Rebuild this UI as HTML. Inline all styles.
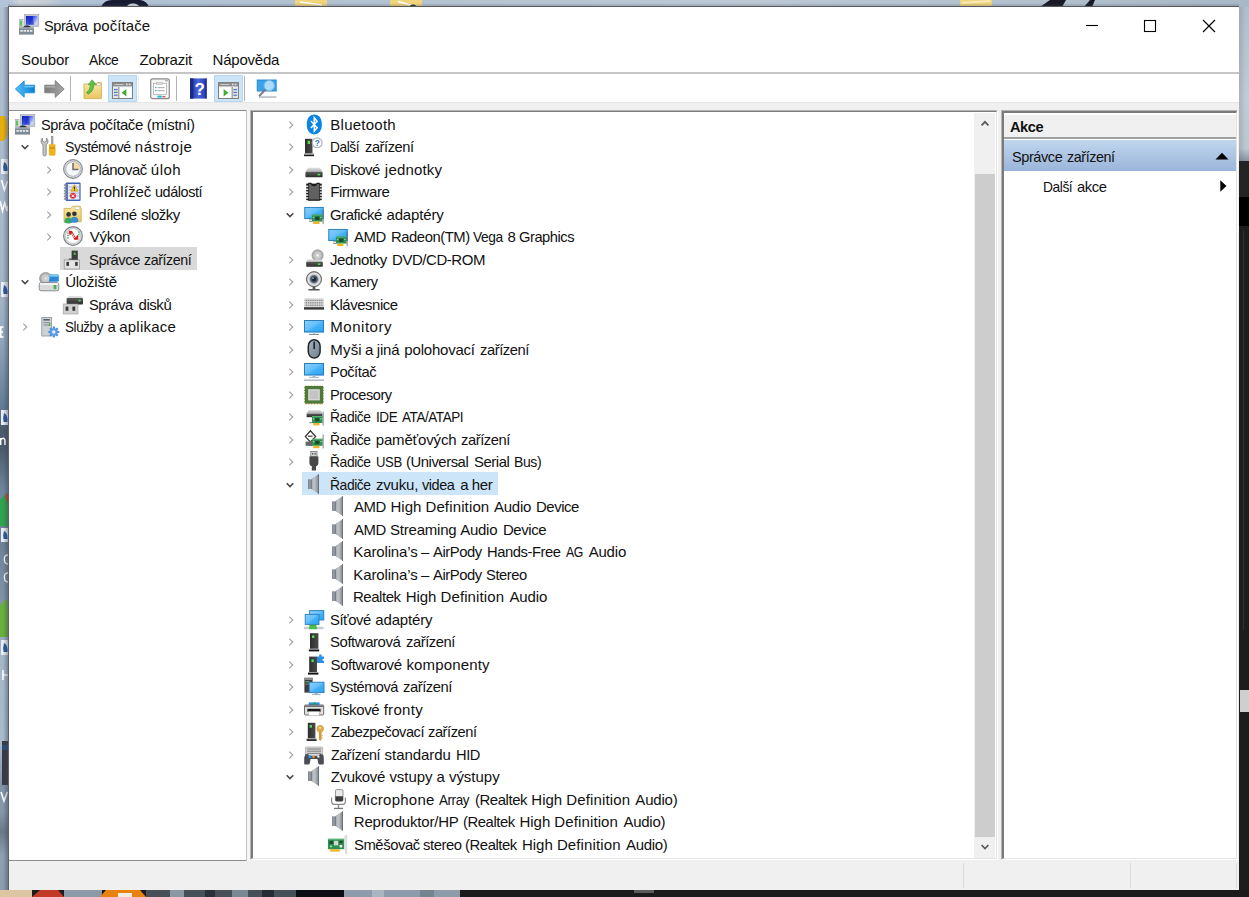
<!DOCTYPE html>
<html><head><meta charset="utf-8"><title>Správa počítače</title>
<style>
html,body{margin:0;padding:0}
body{width:1249px;height:897px;overflow:hidden;position:relative;background:#1c1c1c;font-family:"Liberation Sans",sans-serif;font-size:15px;color:#000}
.ab{position:absolute;display:block}
.tx{position:absolute;white-space:pre;line-height:22.5px;height:22.5px;font-size:15px;color:#111}
#win{position:absolute;left:8px;top:6px;width:1231px;height:884px;background:#fff}
</style></head><body>
<svg class="ab" style="left:0;top:0" width="1249" height="897" viewBox="0 0 1249 897">
<defs>
<linearGradient id="bgTop" x1="0" y1="0" x2="1" y2="0"><stop offset="0" stop-color="#b3c4d7"/><stop offset="0.008" stop-color="#b3c4d7"/><stop offset="0.016" stop-color="#cdd3da"/><stop offset="0.036" stop-color="#c6cdd5"/><stop offset="0.05" stop-color="#b2c3d5"/><stop offset="0.1" stop-color="#b0c2d4"/><stop offset="0.3" stop-color="#b4c3d1"/><stop offset="0.6" stop-color="#bcc9d5"/><stop offset="0.85" stop-color="#b2c0cd"/><stop offset="1" stop-color="#a9b8c6"/></linearGradient>
<linearGradient id="bgLeft" gradientUnits="userSpaceOnUse" x1="0" y1="0" x2="0" y2="897"><stop offset="0.0078" stop-color="#b0c1d3"/><stop offset="0.1561" stop-color="#aabbcf"/><stop offset="0.3344" stop-color="#a2b4c8"/><stop offset="0.3790" stop-color="#90a7bc"/><stop offset="0.4571" stop-color="#5f7a94"/><stop offset="0.4794" stop-color="#4a5a6c"/><stop offset="0.5017" stop-color="#4c5c6e"/><stop offset="0.5463" stop-color="#6f869e"/><stop offset="0.6076" stop-color="#6f8298"/><stop offset="0.6689" stop-color="#7f93a8"/><stop offset="0.7302" stop-color="#a4b7c9"/><stop offset="0.8250" stop-color="#a9bccd"/><stop offset="0.8763" stop-color="#8093a8"/><stop offset="0.9052" stop-color="#8597ab"/><stop offset="0.9275" stop-color="#6b7989"/><stop offset="0.9532" stop-color="#8ea0b4"/><stop offset="0.9922" stop-color="#8a9cb0"/></linearGradient>
<linearGradient id="shL" gradientUnits="userSpaceOnUse" x1="3" y1="0" x2="8" y2="0"><stop offset="0" stop-color="#3a4250" stop-opacity="0"/><stop offset="1" stop-color="#3a4250" stop-opacity="0.42"/></linearGradient>
<linearGradient id="shT" gradientUnits="userSpaceOnUse" x1="0" y1="3" x2="0" y2="6.5"><stop offset="0" stop-color="#3a4250" stop-opacity="0"/><stop offset="1" stop-color="#3a4250" stop-opacity="0.3"/></linearGradient>
<linearGradient id="shR" gradientUnits="userSpaceOnUse" x1="1239" y1="0" x2="1246" y2="0"><stop offset="0" stop-color="#2a3038" stop-opacity="0.16"/><stop offset="1" stop-color="#2a3038" stop-opacity="0"/></linearGradient>
<linearGradient id="bgRight" x1="0" y1="0" x2="0" y2="1"><stop offset="0" stop-color="#b0bfcd"/><stop offset="0.6" stop-color="#c0ccd6"/><stop offset="0.92" stop-color="#bcc7d0"/><stop offset="1" stop-color="#8a949e"/></linearGradient>
</defs>
<rect x="0" y="0" width="1249" height="897" fill="#1c1c1c"/>
<!-- top strip -->
<rect x="0" y="0" width="1249" height="7" fill="url(#bgTop)"/>
<path d="M101 7 Q104 0 112 0 H140 Q147 1 149 7 Z" fill="#171b32"/>
<ellipse cx="133" cy="7" rx="6" ry="3.4" fill="#d8dde4"/>
<rect x="295" y="0" width="32" height="7" fill="#f2d47c"/><path d="M300 2 L322 5" stroke="#fff" stroke-width="1.6"/>
<rect x="390" y="0" width="32" height="7" fill="#f2d47c"/><path d="M398 1.5 L412 5.5" stroke="#fff" stroke-width="1.6"/><ellipse cx="413" cy="6" rx="3" ry="1.6" fill="#333"/>
<rect x="960" y="0" width="32" height="7" fill="#f3d680"/><path d="M962 3 L990 1" stroke="#fbeab8" stroke-width="2"/>
<path d="M1040 7 L1050 0 H1066 L1062 7 Z" fill="#191a28"/>
<path d="M1084 7 L1090 0 H1095 L1092 7 Z" fill="#191a28"/>
<!-- left strip -->
<rect x="0" y="7" width="8" height="883" fill="url(#bgLeft)"/>
<path d="M0 116 H4 Q7.6 118 7.6 128 Q7.6 139 3 141 H0 Z" fill="#e6ad0e"/>
<g fill="#e9eef4"><rect x="1" y="159" width="7" height="15"/><rect x="1" y="282" width="7" height="15"/><rect x="1" y="410" width="7" height="15"/><rect x="1" y="528" width="7" height="14"/><rect x="1" y="640" width="7" height="15"/></g>
<g fill="#2a56a4"><path d="M4 162 Q8 164 7.6 171 H3.6 Q2.6 167 4 162Z"/><path d="M4 285 Q8 287 7.6 294 H3.6 Q2.6 290 4 285Z"/><path d="M4 413 Q8 415 7.6 422 H3.6 Q2.6 418 4 413Z"/><path d="M4 531 Q8 533 7.6 539 H3.6 Q2.6 535 4 531Z"/><path d="M4 643 Q8 645 7.6 652 H3.6 Q2.6 648 4 643Z"/></g>
<g stroke="#fff" stroke-width="1.6" fill="none"><path d="M1.5 180 L4.5 190 L7.5 181"/><path d="M0 201 L2.5 211 L4.8 203 L7 211 L8 206"/><path d="M3.6 327 H0.8 V337 H3.6 M0.8 332 H3"/><path d="M0.6 438 V445 M0.6 440 Q3.6 436.6 5 440 V445"/><path d="M1 792 L4 801 L7.4 792"/><path d="M3 670 V680 M3 675 H8"/></g>
<g stroke="#fff" stroke-width="1.3" fill="none"><path d="M8 555 Q4 555 4.4 559.6 Q4.4 564 8 564"/><path d="M8 573 Q4 573 4.4 577.6 Q4.4 582 8 582"/></g>
<path d="M0 500 Q5 494 8 493 V526 H0 Z" fill="#2ea44e"/><path d="M5 496 Q7 493.6 8 493 V504 Z" fill="#d8402c"/>
<path d="M0 606 Q6 598 8 600 V637 H0 Z" fill="#68b03c"/>
<rect x="2" y="741" width="6" height="44" fill="#3a3a40"/><rect x="2" y="745" width="6" height="5" fill="#2c4c7c"/>
<rect x="0" y="7" width="8" height="883" fill="url(#shL)"/>
<rect x="8" y="0" width="1231" height="7" fill="url(#shT)"/>
<!-- right strip -->
<rect x="1239" y="7" width="10" height="154" fill="url(#bgRight)"/>
<rect x="1239" y="161" width="10" height="36" fill="#242424"/>
<rect x="1239" y="197" width="10" height="29" fill="#000"/>
<rect x="1239" y="226" width="10" height="671" fill="#1d1d1d"/>
<rect x="1239" y="7" width="10" height="154" fill="url(#shR)"/>
<rect x="1243" y="230" width="1" height="400" fill="#303030"/>
<rect x="1240" y="690" width="9" height="22" fill="#cfcfcf"/>
<!-- bottom strip -->
<rect x="0" y="890" width="32" height="7" fill="#dcc6a2"/>
<path d="M32 897 L40 890 H58 L64 897 Z" fill="#c23a28"/>
<rect x="64" y="890" width="38" height="7" fill="#8c9aa8"/>
<path d="M100 897 L106 890 H140 L146 897 Z" fill="#e8820c"/><rect x="118" y="893" width="14" height="4" fill="#f4ece0"/>
<rect x="146" y="890" width="150" height="7" fill="#474f59"/>
<rect x="170" y="890" width="14" height="7" fill="#8a98a6"/><rect x="205" y="890" width="10" height="7" fill="#2a3038"/><rect x="232" y="890" width="16" height="7" fill="#7a8896"/><rect x="262" y="890" width="12" height="7" fill="#262c34"/>
<rect x="296" y="890" width="48" height="7" fill="#0d0e14"/>
<rect x="344" y="890" width="116" height="7" fill="#8d9baa"/><rect x="372" y="890" width="12" height="7" fill="#a9b5c0"/><rect x="420" y="890" width="14" height="7" fill="#76848f"/>
<rect x="460" y="890" width="789" height="7" fill="#1b1b1b"/>
<rect x="634" y="890" width="20" height="3" fill="#5a5a5a"/>
</svg>

<div id="win"></div>
<!-- window borders -->
<div class="ab" style="left:8px;top:6px;width:1231px;height:1px;background:#56595d"></div>
<div class="ab" style="left:8px;top:6px;width:1px;height:884px;background:#5d6165"></div>
<!-- menu underline -->
<div class="ab" style="left:9px;top:72.1px;width:1230px;height:1.8px;background:#c6c6c8"></div>
<!-- grey band + content bg -->
<div class="ab" style="left:9px;top:102px;width:1230px;height:788px;background:#f0f0f0"></div>
<div class="ab" style="left:9px;top:102px;width:1230px;height:1px;background:#e6e6e6"></div>
<!-- left pane -->
<div class="ab" style="left:9px;top:110px;width:238px;height:751px;background:#fff;box-sizing:border-box;border:1px solid #8c8c92;border-left:none;border-right:1px solid #909096"></div>
<div class="ab" style="left:246px;top:110px;width:1px;height:751px;background:#c0c0c6"></div>
<div class="ab" style="left:247px;top:111px;width:3px;height:750px;background:#f6f6f8"></div>
<div class="ab" style="left:60px;top:247.4px;width:136.6px;height:22.3px;background:#d9d9d9"></div>
<!-- tree pane -->
<div class="ab" style="left:250px;top:110px;width:748px;height:750px;background:#fff;box-sizing:border-box;border-top:1px solid #b4b4b4;border-left:1px solid #b4b4b4;border-right:1px solid #fff;border-bottom:1px solid #fff"></div>
<div class="ab" style="left:251px;top:111px;width:746px;height:748px;box-sizing:border-box;border-top:1.8px solid #7a7a7a;border-left:2px solid #7a7a7a;border-right:1px solid #e3e3e3;border-bottom:1px solid #e3e3e3"></div>
<div class="ab" style="left:301.5px;top:472.4px;width:196px;height:22.4px;background:#cce5f8"></div>
<!-- scrollbar -->
<div class="ab" style="left:974px;top:113px;width:21px;height:745px;background:#f0f0f0"></div>
<div class="ab" style="left:975px;top:174px;width:20px;height:663px;background:#cdcdcd"></div>
<svg class="ab" style="left:978.5px;top:117.6px" width="12" height="10" viewBox="0 0 12 10"><path d="M2.6 7.4 L6 3.8 L9.4 7.4" fill="none" stroke="#585858" stroke-width="1.7"/></svg>
<svg class="ab" style="left:979px;top:842px" width="12" height="10" viewBox="0 0 12 10"><path d="M2.6 3 L6 6.6 L9.4 3" fill="none" stroke="#585858" stroke-width="1.7"/></svg>
<!-- actions pane -->
<div class="ab" style="left:1001px;top:110px;width:237px;height:750px;background:#fff;box-sizing:border-box;border-top:1px solid #b4b4b4;border-left:1px solid #b4b4b4;border-right:1px solid #fff;border-bottom:1px solid #fff"></div>
<div class="ab" style="left:1002px;top:111px;width:235px;height:748px;box-sizing:border-box;border-top:2.5px solid #7a7a7a;border-left:2px solid #7a7a7a;border-right:1px solid #e3e3e3;border-bottom:1px solid #e3e3e3"></div>
<div class="ab" style="left:1004px;top:115px;width:232px;height:22px;background:#f0f0f0"></div>
<div class="ab" style="left:1004px;top:137px;width:232px;height:1.6px;background:#a0a0a0"></div>

<div class="ab" style="left:1004px;top:140px;width:232px;height:30.6px;background:linear-gradient(#c0d6ee,#9bb5da)"></div>
<svg class="ab" style="left:1215px;top:152px" width="14" height="8" viewBox="0 0 14 8"><path d="M0.5 7.5 L7 0.8 L13.5 7.5 Z" fill="#000"/></svg>
<svg class="ab" style="left:1220px;top:180px" width="7" height="12" viewBox="0 0 7 12"><path d="M0.3 0.3 L6.5 6 L0.3 11.7 Z" fill="#000"/></svg>
<!-- status bar separators -->
<div class="ab" style="left:963px;top:863px;width:1px;height:25px;background:#dcdcdc"></div>
<div class="ab" style="left:1130px;top:863px;width:1px;height:25px;background:#dcdcdc"></div>
<div class="ab" style="left:1236px;top:863px;width:1px;height:25px;background:#dcdcdc"></div>
<!-- caption buttons -->
<svg class="ab" style="left:1085px;top:18.6px" width="14" height="14" viewBox="0 0 14 14"><path d="M1 6.5 H13" stroke="#000" stroke-width="1.1"/></svg>
<svg class="ab" style="left:1143px;top:19px" width="14" height="14" viewBox="0 0 14 14"><rect x="1.5" y="1.5" width="11" height="11" fill="none" stroke="#000" stroke-width="1.1"/></svg>
<svg class="ab" style="left:1202px;top:19px" width="14" height="14" viewBox="0 0 14 14"><path d="M1 1 L13 13 M13 1 L1 13" stroke="#000" stroke-width="1.2"/></svg>
<!-- toolbar -->
<div class="ab" style="left:108px;top:75px;width:29px;height:27px;background:#cce4f7;box-sizing:border-box;border:1px solid #b5d7f3"></div>
<div class="ab" style="left:214px;top:75px;width:29px;height:27px;background:#cce4f7;box-sizing:border-box;border:1px solid #b5d7f3"></div>
<div class="ab" style="left:70px;top:76px;width:1px;height:25px;background:#b4b4b4"></div>
<div class="ab" style="left:176px;top:76px;width:1px;height:25px;background:#b4b4b4"></div>
<div class="ab" style="left:244px;top:76px;width:1px;height:25px;background:#b4b4b4"></div>
<div class="ab" style="left:138px;top:76px;width:1px;height:25px;background:#ececec"></div>
<!-- back -->
<svg class="ab" style="left:14px;top:78px" width="22" height="22" viewBox="0 0 22 22"><path d="M1.4 11 L10.2 3 V7.2 H20.6 V14.8 H10.2 V19.2 Z" fill="url(#gBack)" stroke="#1f8fe0" stroke-width="0.9" stroke-linejoin="round"/><path d="M10.4 8 H19.6 V9.4 H10.4 Z" fill="#8fd6fb" opacity="0.7"/></svg>
<!-- forward -->
<svg class="ab" style="left:42px;top:78px" width="24" height="22" viewBox="0 0 24 22"><path d="M22.2 11 L13.2 2.6 V7.2 H2.8 V14.8 H13.2 V19.4 Z" fill="url(#gFwd)" stroke="#7e7e7e" stroke-width="0.9" stroke-linejoin="round"/><path d="M3.4 8.2 H13.2 V9.5 H3.4 Z" fill="#c4c4c4" opacity="0.7"/></svg>
<!-- folder up -->
<svg class="ab" style="left:83px;top:78px" width="20" height="22" viewBox="0 0 20 22" overflow="visible"><path d="M1 6 H12.6 L14 4.6 H18.4 V20.6 H1 Z" fill="url(#gFold)" stroke="#cfa848" stroke-width="0.8"/><rect x="13.4" y="5.4" width="4" height="1.8" fill="#fff" stroke="#aaa" stroke-width="0.4"/><path d="M3.4 14.4 Q7.4 12.2 7.4 6.8 H5.2 L9.2 1.8 L13.4 6.8 H10.8 Q10.8 13.6 5 16.2 Z" fill="#5cc046" stroke="#3a9a2a" stroke-width="0.6"/></svg>
<!-- show/hide tree -->
<svg class="ab" style="left:112px;top:82px" width="21" height="17" viewBox="0 0 21 17"><rect x="0.5" y="0.5" width="20" height="16" fill="#f2f2f2" stroke="#808080"/><rect x="1" y="1" width="19" height="3.4" fill="#8c8c8c"/><rect x="14" y="1.6" width="1.6" height="1.6" fill="#e6e6e6"/><rect x="16.8" y="1.6" width="1.6" height="1.6" fill="#e6e6e6"/><rect x="2.4" y="2" width="9" height="1" fill="#c8c8c8"/><rect x="1" y="5.4" width="5.6" height="10.6" fill="#e4e4e4"/><path d="M6.8 5 V16" stroke="#808080" stroke-width="0.9"/><g fill="#4a7ad0"><rect x="2" y="7" width="3.6" height="1.2"/><rect x="2" y="9.8" width="3.6" height="1.2"/><rect x="2" y="12.6" width="3.6" height="1.2"/></g><rect x="8" y="5.6" width="11.4" height="10" fill="#fff"/><path d="M14.4 7 V14.4 L9.6 10.7 Z" fill="#3fae2a"/></svg>
<!-- properties -->
<svg class="ab" style="left:150px;top:78px" width="20" height="22" viewBox="0 0 20 22"><rect x="0.7" y="0.9" width="18.6" height="19.8" rx="2" fill="#f4f4f4" stroke="#8a8a8a" stroke-width="1.2"/><rect x="15.2" y="1.8" width="2.6" height="1.6" fill="#aaa"/><rect x="3.6" y="5.6" width="12.8" height="11" fill="#fff" stroke="#a8a8a8" stroke-width="0.7"/><rect x="6.4" y="4.6" width="6" height="1.8" fill="#dcdcdc" stroke="#a8a8a8" stroke-width="0.5"/><rect x="5" y="9" width="1.6" height="1.2" fill="#2ab8c8"/><rect x="7.6" y="9" width="7" height="1.2" fill="#b4b4b4"/><rect x="5" y="12" width="1.6" height="1.2" fill="#2ab8c8"/><rect x="7.6" y="12" width="7" height="1.2" fill="#b4b4b4"/><rect x="7.4" y="17.6" width="4.4" height="2" fill="#2ab8d8"/><rect x="12.4" y="18" width="3" height="1.4" fill="#c06a6a"/></svg>
<!-- help -->
<svg class="ab" style="left:190px;top:78px" width="17" height="21" viewBox="0 0 17 21"><rect x="0" y="0.4" width="16.6" height="20.2" fill="url(#gHelp)"/><rect x="0" y="0.4" width="3.4" height="20.2" fill="#1a2a8c"/><rect x="15.4" y="0.4" width="1.2" height="20.2" fill="#16268a"/><text x="9.6" y="16.6" font-size="17" font-weight="bold" text-anchor="middle" fill="#fff" font-family="Liberation Sans,sans-serif">?</text></svg>
<!-- action pane -->
<svg class="ab" style="left:218px;top:82px" width="21" height="17" viewBox="0 0 21 17"><rect x="0.5" y="0.5" width="20" height="16" fill="#f2f2f2" stroke="#808080"/><rect x="1" y="1" width="19" height="3.4" fill="#8c8c8c"/><rect x="14" y="1.6" width="1.6" height="1.6" fill="#e6e6e6"/><rect x="16.8" y="1.6" width="1.6" height="1.6" fill="#e6e6e6"/><rect x="2.4" y="2" width="9" height="1" fill="#c8c8c8"/><rect x="14.4" y="5.4" width="5.6" height="10.6" fill="#e4e4e4"/><path d="M14.2 5 V16" stroke="#808080" stroke-width="0.9"/><g fill="#4a7ad0"><rect x="15.4" y="7" width="3.6" height="1.2"/><rect x="15.4" y="9.8" width="3.6" height="1.2"/><rect x="15.4" y="12.6" width="3.6" height="1.2"/></g><rect x="1.6" y="5.6" width="11.4" height="10" fill="#fff"/><path d="M5.6 7 V14.4 L10.4 10.7 Z" fill="#3fae2a"/></svg>
<!-- monitor + magnifier -->
<svg class="ab" style="left:256px;top:79px" width="22" height="21" viewBox="0 0 22 21"><rect x="1.2" y="1" width="19" height="11" fill="#3aa4ea" stroke="#1f86d0" stroke-width="0.9"/><rect x="3" y="17.4" width="17.4" height="1.3" fill="#a4acb4"/><circle cx="13.2" cy="6.6" r="5.2" fill="#a8dcfa" stroke="#7cb4dc" stroke-width="1"/><path d="M9 11 L3.6 16.6" stroke="#767c84" stroke-width="2" stroke-linecap="round"/></svg>
<!-- title icon -->
<svg class="ab" style="left:19px;top:15px" width="20" height="20" overflow="visible"><use href="#i-cm"/></svg>

<svg width="0" height="0" style="position:absolute"><defs>
<linearGradient id="gMon" x1="0" y1="0" x2="1" y2="1"><stop offset="0" stop-color="#8ad0fc"/><stop offset="0.45" stop-color="#66c0fa"/><stop offset="0.6" stop-color="#3fb0f8"/><stop offset="1" stop-color="#2aa4f4"/></linearGradient>
<linearGradient id="gSpk" x1="0" y1="0" x2="1" y2="0"><stop offset="0" stop-color="#a9aeb4"/><stop offset="0.35" stop-color="#c0c4c8"/><stop offset="1" stop-color="#7e848c"/></linearGradient><linearGradient id="gSpkR" x1="0" y1="0" x2="1" y2="0"><stop offset="0" stop-color="#5c646e"/><stop offset="0.45" stop-color="#a2a8b0"/><stop offset="1" stop-color="#5c646e"/></linearGradient>
<linearGradient id="gDrvTop" x1="0" y1="0" x2="0" y2="1"><stop offset="0" stop-color="#e4e4e4"/><stop offset="1" stop-color="#a8a8a8"/></linearGradient>
<linearGradient id="gDark" x1="0" y1="0" x2="0" y2="1"><stop offset="0" stop-color="#5a5a5a"/><stop offset="1" stop-color="#2c2c2c"/></linearGradient>
<linearGradient id="gTower" x1="0" y1="0" x2="1" y2="0"><stop offset="0" stop-color="#2e2e2e"/><stop offset="1" stop-color="#4a4a4a"/></linearGradient>
<linearGradient id="gMouse" x1="0" y1="0" x2="1" y2="1"><stop offset="0" stop-color="#a9b4c0"/><stop offset="1" stop-color="#6f7e8e"/></linearGradient>
<linearGradient id="gCM" x1="0" y1="0" x2="1" y2="0.6"><stop offset="0" stop-color="#0a14b8"/><stop offset="0.5" stop-color="#3a55e0"/><stop offset="1" stop-color="#c8d4f8"/></linearGradient>
<linearGradient id="gFold" x1="0" y1="0" x2="0" y2="1"><stop offset="0" stop-color="#fbe9a6"/><stop offset="1" stop-color="#e9c660"/></linearGradient>
<linearGradient id="gBack" x1="0" y1="0" x2="1" y2="0"><stop offset="0" stop-color="#55c0f6"/><stop offset="1" stop-color="#0a7fd6"/></linearGradient>
<linearGradient id="gFwd" x1="0" y1="0" x2="1" y2="0"><stop offset="0" stop-color="#7a7a7a"/><stop offset="1" stop-color="#a8a8a8"/></linearGradient>
<linearGradient id="gHelp" x1="0" y1="0" x2="1" y2="0"><stop offset="0" stop-color="#1c2f9c"/><stop offset="0.5" stop-color="#4a66d8"/><stop offset="1" stop-color="#2238b0"/></linearGradient>
<radialGradient id="gDisc" cx="0.5" cy="0.5" r="0.5"><stop offset="0" stop-color="#ffffff"/><stop offset="0.35" stop-color="#d8d8d8"/><stop offset="1" stop-color="#a0a0a0"/></radialGradient>
<radialGradient id="gCam" cx="0.5" cy="0.5" r="0.5"><stop offset="0" stop-color="#26303c"/><stop offset="0.45" stop-color="#55606c"/><stop offset="0.62" stop-color="#c8ccd0"/><stop offset="0.8" stop-color="#e8e8e8"/><stop offset="1" stop-color="#777"/></radialGradient>

<!-- pci card piece reused -->
<g id="p-card">
 <rect x="0" y="0" width="10.5" height="7" fill="#2f8f4e"/>
 <rect x="0" y="0" width="10.5" height="1" fill="#57b273"/>
 <rect x="3.2" y="2" width="4.2" height="3.4" fill="#1d4a2c"/>
 <rect x="1" y="2.2" width="1.2" height="1.2" fill="#9fe0b0"/>
 <rect x="8.3" y="2.2" width="1.2" height="1.2" fill="#9fe0b0"/>
 <rect x="1.2" y="7" width="6.3" height="2.4" fill="#f0b429"/>
 <rect x="10.7" y="-4.4" width="0.8" height="14" fill="#5c6670"/><rect x="-2.8" y="6.3" width="2.8" height="0.8" fill="#5c6670"/>
</g>

<symbol id="i-bt" overflow="visible"><rect x="2.8" y="-0.6" width="15" height="20" rx="7.5" ry="8.4" fill="#0b84e6"/><path d="M6.9 6.1 L13.1 12.7 L10.3 15.9 L10.3 2.9 L13.1 6.3 L6.9 12.9" fill="none" stroke="#fff" stroke-width="1.5" stroke-linejoin="miter"/></symbol>

<symbol id="i-other" overflow="visible"><path d="M1 1.8 H8.5 V16.5 H1 Z" fill="url(#gTower)"/><rect x="3.6" y="3.8" width="2.4" height="3.2" fill="#52e052"/><rect x="0" y="16.5" width="10" height="1.3" fill="#9a9a9a"/><rect x="0" y="17.8" width="10" height="1.4" fill="#1a1a1a"/><circle cx="13.2" cy="5.8" r="4.9" fill="#fff" stroke="#b4b8bc" stroke-width="1.3"/><text x="13.2" y="8.8" font-size="8.4" font-weight="bold" text-anchor="middle" fill="#3b78c4" font-family="Liberation Sans,sans-serif">?</text></symbol>

<symbol id="i-disk" overflow="visible"><path d="M4 7.8 H16 L18.6 12 H1.4 Z" fill="url(#gDrvTop)"/><rect x="1.4" y="12" width="17.2" height="5.2" rx="0.8" fill="url(#gDark)"/><rect x="13.6" y="13.8" width="2.6" height="1.6" fill="#52e052"/></symbol>

<symbol id="i-chip" overflow="visible"><rect x="2.2" y="1.6" width="15.6" height="16.6" fill="#1c1c1c"/><g fill="#dcdcdc"><rect x="2" y="3.6" width="16" height="1.5"/><rect x="2" y="6.5" width="16" height="1.5"/><rect x="2" y="9.4" width="16" height="1.5"/><rect x="2" y="12.3" width="16" height="1.5"/><rect x="2" y="15.2" width="16" height="1.5"/></g><path d="M4.2 0.8 H7.2 A2.9 2.9 0 0 0 12.8 0.8 H15.8 V18.8 H4.2 Z" fill="#1a1a1a"/><path d="M4.8 2 H6.8 A3.4 3.4 0 0 0 13.2 2 H15.2 V17.6 H4.8 Z" fill="#606060"/></symbol>

<symbol id="i-gpu" overflow="visible"><rect x="0.4" y="2" width="19.2" height="12" fill="url(#gMon)"/><rect x="0.8" y="2.4" width="18.4" height="11.2" fill="none" stroke="#2c7cb8" stroke-width="0.9"/><rect x="5" y="14.2" width="6" height="1" fill="#9aa"/><use href="#p-card" x="8" y="9.6"/></symbol>

<symbol id="i-dvd" overflow="visible"><circle cx="13.6" cy="5.4" r="5.6" fill="url(#gDisc)" stroke="#9a9a9a" stroke-width="0.8"/><circle cx="13.6" cy="5.4" r="1.6" fill="#fff" stroke="#aaa" stroke-width="0.6"/><path d="M3.6 9.6 H17 L18.8 12 H2.2 Z" fill="#d4d4d4"/><rect x="2.2" y="11.8" width="16.6" height="4.9" rx="0.8" fill="url(#gDark)"/><rect x="13.8" y="13.4" width="2.6" height="1.5" fill="#52e052"/></symbol>

<symbol id="i-cam" overflow="visible"><circle cx="10" cy="7.2" r="7.6" fill="url(#gCam)"/><circle cx="10" cy="7.2" r="7.6" fill="none" stroke="#6a6a6a" stroke-width="0.9"/><circle cx="10" cy="7.2" r="2" fill="#1a222c"/><circle cx="9" cy="6.2" r="0.9" fill="#8fb0d0"/><rect x="8.6" y="14.6" width="2.8" height="2.6" fill="#555"/><rect x="4.4" y="17" width="11.2" height="1.5" fill="#555"/></symbol>

<symbol id="i-kbd" overflow="visible"><g transform="translate(0,-0.8)"><rect x="0" y="4" width="20" height="11.4" rx="1" fill="#dcdcdc"/><rect x="0" y="13" width="20" height="2.4" fill="#3a3a3a"/><g fill="#8a8a8a"><rect x="1.5" y="5.6" width="17" height="1.3"/><rect x="1.5" y="8" width="17" height="1.3"/><rect x="1.5" y="10.4" width="17" height="1.3"/></g><g stroke="#dcdcdc" stroke-width="0.7"><path d="M3.5 5 V12.4 M5.7 5 V12.4 M7.9 5 V12.4 M10.1 5 V12.4 M12.3 5 V12.4 M14.5 5 V12.4 M16.7 5 V12.4"/></g></g></symbol>

<symbol id="i-mon" overflow="visible"><rect x="0" y="3" width="20" height="12.4" fill="url(#gMon)"/><rect x="0.5" y="3.5" width="19" height="11.4" fill="none" stroke="#2c7cb8" stroke-width="1"/><rect x="9" y="15.4" width="2" height="1.4" fill="#a4c4de"/><rect x="5" y="16.9" width="10" height="1.1" fill="#8a9098"/></symbol>

<symbol id="i-mouse" overflow="visible"><rect x="4.3" y="-0.2" width="11.8" height="18.2" rx="5.9" ry="6.2" fill="url(#gMouse)" stroke="#22262a" stroke-width="1.5"/><rect x="9.4" y="1.6" width="1.6" height="7.6" rx="0.7" fill="#1c2024"/></symbol>

<symbol id="i-pc" overflow="visible"><rect x="0" y="1" width="20" height="12.4" fill="url(#gMon)"/><rect x="0.5" y="1.5" width="19" height="11.4" fill="none" stroke="#2c7cb8" stroke-width="1"/><rect x="8.5" y="13.4" width="3" height="1.6" fill="#a9b9c8"/><rect x="5" y="14.8" width="10" height="1.2" fill="#a9b9c8"/><rect x="0" y="17.4" width="20" height="1.6" fill="#b4bcc6"/></symbol>

<symbol id="i-cpu" overflow="visible"><g fill="#caa52a"><path d="M1.5 0.4 h1.2 v19 h-1.2z M4.3 0.4 h1.2 v19 h-1.2z M7.1 0.4 h1.2 v19 h-1.2z M9.9 0.4 h1.2 v19 h-1.2z M12.7 0.4 h1.2 v19 h-1.2z M15.5 0.4 h1.2 v19 h-1.2z M17.6 0.4 h1 v19 h-1z"/><path d="M0 2 h20 v1.2 h-20z M0 4.8 h20 v1.2 h-20z M0 7.6 h20 v1.2 h-20z M0 10.4 h20 v1.2 h-20z M0 13.2 h20 v1.2 h-20z M0 16 h20 v1.2 h-20z"/></g><rect x="0.8" y="1" width="18.4" height="17.6" fill="#4c7a3c"/><rect x="4.2" y="4.2" width="11.6" height="11.2" fill="#dcdcdc"/><rect x="5.4" y="5.4" width="9.2" height="8.8" fill="#c4c4c4"/></symbol>

<symbol id="i-ide" overflow="visible"><path d="M4.6 3 H16.4 L18.4 6.6 H2.6 Z" fill="url(#gDrvTop)"/><rect x="2.6" y="6.6" width="15.8" height="3.6" fill="url(#gDark)"/><use href="#p-card" x="8" y="9"/></symbol>

<symbol id="i-stor" overflow="visible"><path d="M6.4 0.8 L11.6 6.6 L6.4 12 L1.4 6.6 Z" fill="#fff" stroke="#3a3a3a" stroke-width="1.3"/><path d="M4 6.2 H8.6" stroke="#3a3a3a" stroke-width="1.2"/><rect x="1.6" y="11.6" width="7" height="4.2" fill="#666"/><use href="#p-card" x="8" y="8.8"/></symbol>

<symbol id="i-usb" overflow="visible"><rect x="6.8" y="-0.6" width="6.2" height="5.2" fill="#d6d6d6" stroke="#777" stroke-width="0.8"/><rect x="8" y="1" width="1.3" height="1.6" fill="#555"/><rect x="10.5" y="1" width="1.3" height="1.6" fill="#555"/><path d="M5.4 4.4 H14.4 V10.4 Q14.4 13.6 12 14.2 V18.4 H7.8 V14.2 Q5.4 13.6 5.4 10.4 Z" fill="#484848"/></symbol>

<symbol id="i-spk" overflow="visible"><rect x="4.2" y="4.3" width="3.9" height="9.7" fill="url(#gSpkR)"/><path d="M7.9 3.5 L15 -1 V19 L7.9 14.6 Z" fill="url(#gSpk)"/><path d="M14 -0.4 L15 -1 V19 L14 18.4 Z" fill="#6a7078"/></symbol>

<symbol id="i-net" overflow="visible"><rect x="5.6" y="0.6" width="14.2" height="9.4" fill="url(#gMon)" stroke="#2c7cb8" stroke-width="0.9"/><rect x="1.2" y="4.4" width="13.8" height="10" fill="url(#gMon)" stroke="#2c7cb8" stroke-width="0.9"/><rect x="5.4" y="14.8" width="7" height="2.4" fill="#36b536"/><rect x="0" y="16.8" width="19.6" height="2.4" fill="#c9cdd0"/><rect x="5" y="16.8" width="8" height="2.4" fill="#4cc04c"/></symbol>

<symbol id="i-swd" overflow="visible"><rect x="6" y="1.2" width="8.4" height="15.6" fill="url(#gTower)"/><rect x="8" y="3.4" width="2.4" height="2.6" fill="#52e052"/><rect x="4.8" y="16.8" width="10.4" height="1.2" fill="#999"/><rect x="4.8" y="17.8" width="10.4" height="1.6" fill="#141414"/></symbol>

<symbol id="i-swc" overflow="visible"><rect x="5.2" y="1.6" width="7.8" height="15.4" fill="url(#gTower)"/><rect x="7.4" y="4.4" width="2.4" height="2.6" fill="#52e052"/><rect x="4" y="17" width="10.4" height="1.2" fill="#999"/><rect x="4" y="18" width="10.4" height="1.6" fill="#141414"/><path d="M13 1.4 H15.2 V-0.4 H17.6 V1.4 H20 V4 H18.6 V5.8 H20 V8 H13 Z" fill="#2f8fe4"/></symbol>

<symbol id="i-sys" overflow="visible"><rect x="0.4" y="0.8" width="8.2" height="14.8" fill="#3c3c3c"/><rect x="0.4" y="0.8" width="8.2" height="2.2" fill="#8c8c8c"/><rect x="1.4" y="4.2" width="4" height="1.2" fill="#6ab06a"/><rect x="1.4" y="6.6" width="4" height="1" fill="#888"/><rect x="5.2" y="5.2" width="14.8" height="10.4" fill="url(#gMon)" stroke="#2c7cb8" stroke-width="0.9"/><rect x="10.6" y="15.8" width="3.2" height="1.4" fill="#9fb4c8"/><rect x="8" y="17" width="8.4" height="1.1" fill="#9fb4c8"/></symbol>

<symbol id="i-prn" overflow="visible"><rect x="4.8" y="2.4" width="10.8" height="3.4" fill="#2a8ee8"/><rect x="9.2" y="2.4" width="2.8" height="3.4" fill="#22a84e"/><rect x="0.5" y="5" width="19.2" height="10" rx="1" fill="#dedede" stroke="#606060" stroke-width="0.9"/><rect x="1" y="5.4" width="18.2" height="1.6" fill="#707070"/><rect x="3.4" y="8.8" width="13.2" height="3" fill="#181818"/><rect x="4.8" y="11.6" width="10.4" height="4.2" fill="#fff" stroke="#b0b0b0" stroke-width="0.6"/></symbol>

<symbol id="i-sec" overflow="visible"><rect x="3.8" y="0.8" width="7.6" height="15.6" fill="url(#gTower)"/><rect x="5.6" y="3" width="2.4" height="2.6" fill="#52e052"/><rect x="2.6" y="16.4" width="10" height="1.1" fill="#999"/><rect x="2.6" y="17.3" width="10" height="1.6" fill="#141414"/><circle cx="16.2" cy="6.8" r="3.7" fill="#dcaa48"/><circle cx="16" cy="5.8" r="1" fill="#fff7d6"/><path d="M14.9 9.6 H17.5 V17.4 L16.2 18.8 L14.9 17.4 Z" fill="#cc9c3c"/><rect x="17.5" y="13" width="1.1" height="1.2" fill="#cc9c3c"/><rect x="17.5" y="15.4" width="1.1" height="1.1" fill="#cc9c3c"/></symbol>

<symbol id="i-hid" overflow="visible"><rect x="1.4" y="2" width="17.2" height="8.6" rx="0.8" fill="#dadada" stroke="#999" stroke-width="0.6"/><g fill="#8a8a8a"><rect x="2.8" y="3.4" width="14.4" height="1.2"/><rect x="2.8" y="5.6" width="14.4" height="1.2"/><rect x="2.8" y="7.8" width="14.4" height="1.2"/></g><path d="M1 11 Q0.2 11 0.2 13.4 V18.4 Q0.2 19.6 1.6 19.6 H4.4 Q5.6 19.6 5.8 18 L6.6 14 H13.4 L14.2 18 Q14.4 19.6 15.6 19.6 H18.4 Q19.8 19.6 19.8 18.4 V13.4 Q19.8 11 19 9.4 L16 9 L14.4 11 H5.6 L4 9 L1 9.4 Z" fill="#4a4e54"/><rect x="4.4" y="10.4" width="3" height="2.6" fill="#2f8fe4"/><rect x="8.4" y="10.8" width="2.2" height="2" fill="#f0a020"/><circle cx="14.4" cy="11.6" r="1.2" fill="#e8e8e8"/></symbol>

<symbol id="i-mic" overflow="visible"><rect x="7.4" y="-0.4" width="7.6" height="11.6" rx="1.2" fill="#e9e9e9" stroke="#8a8a8a" stroke-width="0.9"/><path d="M7.4 6.2 H15 V10 Q15 11.2 13.8 11.2 H8.6 Q7.4 11.2 7.4 10 Z" fill="#3c3c3c"/><path d="M3.6 7.6 V11.4 Q3.6 14.4 7 14.4 H14 Q17.4 14.4 17.4 11.4 V7.6" fill="none" stroke="#8a8a8a" stroke-width="1.2"/><rect x="9.8" y="14.4" width="1.4" height="3.6" fill="#8a8a8a"/><rect x="6" y="17.8" width="9" height="1.3" fill="#777"/></symbol>

<symbol id="i-snd" overflow="visible"><rect x="0" y="3.8" width="16" height="10.4" fill="#2f8f4e"/><rect x="0" y="3.8" width="16" height="1.2" fill="#57b273"/><rect x="1.6" y="6" width="3.2" height="3" fill="#1d4a2c"/><rect x="6" y="5.8" width="4.2" height="4.6" fill="#d8d8d8"/><rect x="11.4" y="6" width="3" height="2.2" fill="#1d4a2c"/><rect x="2" y="10.6" width="2" height="1.6" fill="#9fe0b0"/><rect x="11.6" y="10" width="2.6" height="2.4" fill="#f4f4f4"/><rect x="2.2" y="14.2" width="9.6" height="2.4" fill="#f0b429"/><path d="M16.4 2 L18 0 H18.8 V18.6 H17.6 V15.6 L16.4 14.4 Z" fill="#dfe3e6" stroke="#b8bec4" stroke-width="0.4"/></symbol>

<!-- ===== left pane icons ===== -->
<symbol id="i-cm" overflow="visible"><rect x="5.6" y="-0.4" width="14.2" height="11.8" fill="#c4c9cf" stroke="#9aa0a8" stroke-width="0.6"/><rect x="7" y="1" width="11.4" height="8.8" fill="url(#gCM)"/><path d="M9.4 9.8 L10.6 1 L13.6 1 L15 9.8 Z" fill="#0c1ab4" opacity="0.55"/><rect x="1" y="5.4" width="2.2" height="5.4" fill="#5cc45c"/><rect x="0.6" y="4.6" width="3.4" height="7" fill="none" stroke="#a0a6ac" stroke-width="0.7"/><path d="M4 12 Q8 8.6 11.6 11.8 L11.6 13 H4 Z" fill="#2a2e36"/><rect x="0" y="12.4" width="15" height="7.2" fill="#7e8a94"/><rect x="0" y="12.4" width="15" height="1.2" fill="#a9b3bc"/><g fill="#e4e8ec"><rect x="1.4" y="15" width="2.4" height="1.8"/><rect x="4.6" y="15" width="2.4" height="1.8"/><rect x="7.8" y="15" width="2.4" height="1.8"/><rect x="11" y="15" width="2.4" height="1.8"/></g></symbol>

<symbol id="i-tools" overflow="visible"><path d="M3.4 1.2 Q1.6 2.4 2.2 5.2 Q2.6 7 4 7.6 V17.6 Q4 19 5.6 19 Q7.2 19 7.2 17.6 V7.6 Q8.8 6.8 9 4.8 Q9.2 2.2 7.4 1 V4.4 Q5.6 5.6 3.6 4.4 Z" fill="#c6c6c6" stroke="#7c7c7c" stroke-width="0.8"/><rect x="12.4" y="-0.6" width="1.6" height="8" fill="#b0b0b0" stroke="#7a7a7a" stroke-width="0.5"/><path d="M11 7.2 H15.4 Q16.8 7.2 16.6 8.6 L16.2 11 Q16.8 12 16.6 13.4 L16.4 17.4 Q16.2 18.8 14.6 18.8 H11.8 Q10.2 18.8 10 17.4 L9.8 13.4 Q9.6 12 10.2 11 L9.8 8.6 Q9.6 7.2 11 7.2 Z" fill="#f2b21c"/><path d="M10.2 11 H16.2" stroke="#b47c08" stroke-width="0.9"/></symbol>

<symbol id="i-clock" overflow="visible"><g transform="translate(0,-1)"><circle cx="10" cy="10" r="9.4" fill="#cfd2d6" stroke="#7c8086" stroke-width="1"/><circle cx="10" cy="10" r="7.2" fill="#f6f7f9" stroke="#a8acb2" stroke-width="0.7"/><path d="M10 10 V3 A7 7 0 0 1 17 10 Z" fill="#f5dba0"/><path d="M10 4 V10.4 H15.4" fill="none" stroke="#6a6e76" stroke-width="1.5"/></g></symbol>

<symbol id="i-evt" overflow="visible"><rect x="2.6" y="0.6" width="15" height="18.4" rx="1" fill="#3d62b4"/><rect x="4.8" y="2" width="11.6" height="15.6" fill="#e8ecf6"/><g stroke="#9fb0d8" stroke-width="0.8"><path d="M5.4 5 H16 M5.4 8 H16 M5.4 11 H16 M5.4 14 H16"/></g><g fill="#9aa2b0" stroke="#5a6270" stroke-width="0.4"><rect x="1" y="2.4" width="3.2" height="1.4" rx="0.7"/><rect x="1" y="5.2" width="3.2" height="1.4" rx="0.7"/><rect x="1" y="8" width="3.2" height="1.4" rx="0.7"/><rect x="1" y="10.8" width="3.2" height="1.4" rx="0.7"/><rect x="1" y="13.6" width="3.2" height="1.4" rx="0.7"/><rect x="1" y="16.2" width="3.2" height="1.4" rx="0.7"/></g><path d="M11.4 2.6 L15 9.2 H7.8 Z" fill="#f5c518" stroke="#b48a08" stroke-width="0.5"/><rect x="10.9" y="4.6" width="1" height="2.6" fill="#222"/><rect x="10.9" y="7.7" width="1" height="0.9" fill="#222"/><circle cx="10" cy="13.8" r="3" fill="#dc3232"/><path d="M8.6 12.4 L11.4 15.2 M11.4 12.4 L8.6 15.2" stroke="#fff" stroke-width="1"/></symbol>

<symbol id="i-shf" overflow="visible"><path d="M1 3.4 H8 L9.6 1.2 H17.4 V3.4 H18.2 V16.8 H1 Z" fill="url(#gFold)" stroke="#c9a23c" stroke-width="0.7"/><rect x="12" y="2" width="4.6" height="2.2" fill="#fff" stroke="#aaa" stroke-width="0.4"/><circle cx="5.6" cy="9.4" r="2.3" fill="#2c3a2c"/><path d="M1.4 17.4 Q1.4 12.4 5.6 12.4 Q9.6 12.4 9.6 17.4 Q5.6 19.6 1.4 17.4Z" fill="#38a85c"/><circle cx="11.4" cy="8.8" r="2.3" fill="#2c343c"/><path d="M7.6 16.8 Q7.6 11.8 11.4 11.8 Q15.4 11.8 15.4 16.8 Q11.4 18.8 7.6 16.8Z" fill="#3a8ed0"/></symbol>

<symbol id="i-perf" overflow="visible"><g transform="translate(0,-1)"><circle cx="10" cy="10" r="9.4" fill="#d8dadd" stroke="#7c8086" stroke-width="1.1"/><circle cx="10" cy="10" r="7.4" fill="#fff" stroke="#b0b4b8" stroke-width="0.6"/><path d="M5 6.4 V12.6" stroke="#2e9a46" stroke-width="1.4" stroke-dasharray="1.4 1"/><path d="M5.6 4.6 L9 5 L12.6 11.6 L14.6 8.4 L15.6 13.6 L11.6 14 L8.4 8 L6.6 9.6 Z" fill="#d81e1e"/><path d="M9 7.4 L11.6 12" stroke="#fff" stroke-width="0.8"/><path d="M15.8 5.4 V11" stroke="#2e9a46" stroke-width="1.2" stroke-dasharray="1.4 1"/></g></symbol>

<symbol id="i-dm" overflow="visible"><rect x="1.2" y="9.9" width="15.4" height="9.1" fill="#e4e4e4" stroke="#8e8e8e" stroke-width="0.7"/><rect x="5.8" y="8.5" width="3" height="1.3" fill="#555"/><rect x="8.6" y="0.6" width="6.2" height="9.2" fill="#3a3f3a"/><rect x="10.8" y="2.6" width="1.8" height="2.2" fill="#6cc46c"/><rect x="3.4" y="11.9" width="2.6" height="4" fill="#3a3a3a"/><rect x="12.1" y="11.9" width="2.6" height="4" fill="#3a3a3a"/></symbol>

<symbol id="i-sto" overflow="visible"><circle cx="6.6" cy="6.4" r="6" fill="url(#gDisc)" stroke="#8e8e8e" stroke-width="0.7"/><circle cx="6.6" cy="6.4" r="1.6" fill="#f4f4f4" stroke="#999" stroke-width="0.5"/><rect x="10" y="2.4" width="9.8" height="7.4" rx="1.4" fill="#2a8ad8"/><rect x="10" y="2.4" width="9.8" height="2.4" rx="1.2" fill="#7cc4f4"/><rect x="7.4" y="5" width="3" height="2.6" fill="#d0d4d8"/><rect x="0.2" y="10.6" width="19.6" height="8.2" rx="2" fill="#d8dadc" stroke="#7e8288" stroke-width="0.9"/><rect x="0.8" y="11" width="18.4" height="2" rx="1" fill="#f2f3f4"/><rect x="14.6" y="13" width="2.8" height="4.2" fill="#4ab04a"/></symbol>

<symbol id="i-dsk" overflow="visible"><path d="M6 1.2 H18.4 L20 3.2 H4 Z" fill="#d6d6d6"/><rect x="3.6" y="3" width="16.4" height="6.4" rx="0.8" fill="url(#gDark)"/><rect x="15.4" y="4.8" width="2.2" height="1.6" fill="#52e052"/><rect x="0.2" y="9" width="14.8" height="10" fill="#d0d0d0" stroke="#9a9a9a" stroke-width="0.6"/><rect x="2.6" y="11.6" width="2.8" height="4.2" fill="#3a3a3a"/><rect x="9.4" y="11.6" width="2.8" height="4.2" fill="#3a3a3a"/></symbol>

<symbol id="i-svc" overflow="visible"><rect x="2.8" y="0.4" width="9.6" height="18.6" fill="#cdd2d6" stroke="#8a9096" stroke-width="0.8"/><rect x="4.4" y="2" width="6.4" height="1.6" fill="#5a626a"/><rect x="4.4" y="5" width="6.4" height="1.2" fill="#8a9298"/><rect x="4.4" y="7.4" width="6.4" height="1.2" fill="#8a9298"/><rect x="10" y="6" width="1.4" height="3" fill="#4ab04a"/><g transform="translate(14.8 15)"><g fill="#4a8cd8"><rect x="-1.1" y="-5.4" width="2.2" height="10.8"/><rect x="-5.4" y="-1.1" width="10.8" height="2.2"/><rect x="-1.1" y="-5.4" width="2.2" height="10.8" transform="rotate(45)"/><rect x="-1.1" y="-5.4" width="2.2" height="10.8" transform="rotate(-45)"/></g><circle r="3.8" fill="#5a9ce4"/><circle r="1.7" fill="#e8f0fa"/></g></symbol>

</defs></svg>
<svg class="ab" style="left:286.5px;top:118.8px" width="8" height="12" viewBox="0 0 8 12"><path d="M2.3 2.6 L5.8 6 L2.3 9.4" fill="none" stroke="#a0a0a0" stroke-width="1.1"/></svg>
<svg class="ab" style="left:286.5px;top:141.3px" width="8" height="12" viewBox="0 0 8 12"><path d="M2.3 2.6 L5.8 6 L2.3 9.4" fill="none" stroke="#a0a0a0" stroke-width="1.1"/></svg>
<svg class="ab" style="left:286.5px;top:163.8px" width="8" height="12" viewBox="0 0 8 12"><path d="M2.3 2.6 L5.8 6 L2.3 9.4" fill="none" stroke="#a0a0a0" stroke-width="1.1"/></svg>
<svg class="ab" style="left:286.5px;top:186.3px" width="8" height="12" viewBox="0 0 8 12"><path d="M2.3 2.6 L5.8 6 L2.3 9.4" fill="none" stroke="#a0a0a0" stroke-width="1.1"/></svg>
<svg class="ab" style="left:284px;top:210.8px" width="12" height="8" viewBox="0 0 12 8"><path d="M2.7 2.3 L6 5.6 L9.3 2.3" fill="none" stroke="#484848" stroke-width="1.6"/></svg>
<svg class="ab" style="left:286.5px;top:253.8px" width="8" height="12" viewBox="0 0 8 12"><path d="M2.3 2.6 L5.8 6 L2.3 9.4" fill="none" stroke="#a0a0a0" stroke-width="1.1"/></svg>
<svg class="ab" style="left:286.5px;top:276.3px" width="8" height="12" viewBox="0 0 8 12"><path d="M2.3 2.6 L5.8 6 L2.3 9.4" fill="none" stroke="#a0a0a0" stroke-width="1.1"/></svg>
<svg class="ab" style="left:286.5px;top:298.8px" width="8" height="12" viewBox="0 0 8 12"><path d="M2.3 2.6 L5.8 6 L2.3 9.4" fill="none" stroke="#a0a0a0" stroke-width="1.1"/></svg>
<svg class="ab" style="left:286.5px;top:321.3px" width="8" height="12" viewBox="0 0 8 12"><path d="M2.3 2.6 L5.8 6 L2.3 9.4" fill="none" stroke="#a0a0a0" stroke-width="1.1"/></svg>
<svg class="ab" style="left:286.5px;top:343.8px" width="8" height="12" viewBox="0 0 8 12"><path d="M2.3 2.6 L5.8 6 L2.3 9.4" fill="none" stroke="#a0a0a0" stroke-width="1.1"/></svg>
<svg class="ab" style="left:286.5px;top:366.3px" width="8" height="12" viewBox="0 0 8 12"><path d="M2.3 2.6 L5.8 6 L2.3 9.4" fill="none" stroke="#a0a0a0" stroke-width="1.1"/></svg>
<svg class="ab" style="left:286.5px;top:388.8px" width="8" height="12" viewBox="0 0 8 12"><path d="M2.3 2.6 L5.8 6 L2.3 9.4" fill="none" stroke="#a0a0a0" stroke-width="1.1"/></svg>
<svg class="ab" style="left:286.5px;top:411.3px" width="8" height="12" viewBox="0 0 8 12"><path d="M2.3 2.6 L5.8 6 L2.3 9.4" fill="none" stroke="#a0a0a0" stroke-width="1.1"/></svg>
<svg class="ab" style="left:286.5px;top:433.8px" width="8" height="12" viewBox="0 0 8 12"><path d="M2.3 2.6 L5.8 6 L2.3 9.4" fill="none" stroke="#a0a0a0" stroke-width="1.1"/></svg>
<svg class="ab" style="left:286.5px;top:456.3px" width="8" height="12" viewBox="0 0 8 12"><path d="M2.3 2.6 L5.8 6 L2.3 9.4" fill="none" stroke="#a0a0a0" stroke-width="1.1"/></svg>
<svg class="ab" style="left:284px;top:480.8px" width="12" height="8" viewBox="0 0 12 8"><path d="M2.7 2.3 L6 5.6 L9.3 2.3" fill="none" stroke="#484848" stroke-width="1.6"/></svg>
<svg class="ab" style="left:286.5px;top:613.8px" width="8" height="12" viewBox="0 0 8 12"><path d="M2.3 2.6 L5.8 6 L2.3 9.4" fill="none" stroke="#a0a0a0" stroke-width="1.1"/></svg>
<svg class="ab" style="left:286.5px;top:636.3px" width="8" height="12" viewBox="0 0 8 12"><path d="M2.3 2.6 L5.8 6 L2.3 9.4" fill="none" stroke="#a0a0a0" stroke-width="1.1"/></svg>
<svg class="ab" style="left:286.5px;top:658.8px" width="8" height="12" viewBox="0 0 8 12"><path d="M2.3 2.6 L5.8 6 L2.3 9.4" fill="none" stroke="#a0a0a0" stroke-width="1.1"/></svg>
<svg class="ab" style="left:286.5px;top:681.3px" width="8" height="12" viewBox="0 0 8 12"><path d="M2.3 2.6 L5.8 6 L2.3 9.4" fill="none" stroke="#a0a0a0" stroke-width="1.1"/></svg>
<svg class="ab" style="left:286.5px;top:703.8px" width="8" height="12" viewBox="0 0 8 12"><path d="M2.3 2.6 L5.8 6 L2.3 9.4" fill="none" stroke="#a0a0a0" stroke-width="1.1"/></svg>
<svg class="ab" style="left:286.5px;top:726.3px" width="8" height="12" viewBox="0 0 8 12"><path d="M2.3 2.6 L5.8 6 L2.3 9.4" fill="none" stroke="#a0a0a0" stroke-width="1.1"/></svg>
<svg class="ab" style="left:286.5px;top:748.8px" width="8" height="12" viewBox="0 0 8 12"><path d="M2.3 2.6 L5.8 6 L2.3 9.4" fill="none" stroke="#a0a0a0" stroke-width="1.1"/></svg>
<svg class="ab" style="left:284px;top:773.3px" width="12" height="8" viewBox="0 0 12 8"><path d="M2.7 2.3 L6 5.6 L9.3 2.3" fill="none" stroke="#484848" stroke-width="1.6"/></svg>
<svg class="ab" style="left:18.5px;top:143.3px" width="12" height="8" viewBox="0 0 12 8"><path d="M2.7 2.3 L6 5.6 L9.3 2.3" fill="none" stroke="#484848" stroke-width="1.6"/></svg>
<svg class="ab" style="left:45px;top:163.8px" width="8" height="12" viewBox="0 0 8 12"><path d="M2.3 2.6 L5.8 6 L2.3 9.4" fill="none" stroke="#a0a0a0" stroke-width="1.1"/></svg>
<svg class="ab" style="left:45px;top:186.3px" width="8" height="12" viewBox="0 0 8 12"><path d="M2.3 2.6 L5.8 6 L2.3 9.4" fill="none" stroke="#a0a0a0" stroke-width="1.1"/></svg>
<svg class="ab" style="left:45px;top:208.8px" width="8" height="12" viewBox="0 0 8 12"><path d="M2.3 2.6 L5.8 6 L2.3 9.4" fill="none" stroke="#a0a0a0" stroke-width="1.1"/></svg>
<svg class="ab" style="left:45px;top:231.3px" width="8" height="12" viewBox="0 0 8 12"><path d="M2.3 2.6 L5.8 6 L2.3 9.4" fill="none" stroke="#a0a0a0" stroke-width="1.1"/></svg>
<svg class="ab" style="left:18.5px;top:278.3px" width="12" height="8" viewBox="0 0 12 8"><path d="M2.7 2.3 L6 5.6 L9.3 2.3" fill="none" stroke="#484848" stroke-width="1.6"/></svg>
<svg class="ab" style="left:20.5px;top:321.3px" width="8" height="12" viewBox="0 0 8 12"><path d="M2.3 2.6 L5.8 6 L2.3 9.4" fill="none" stroke="#a0a0a0" stroke-width="1.1"/></svg>
<svg class="ab" style="left:304px;top:114.6px" width="20" height="20" overflow="visible"><use href="#i-bt"/></svg>
<svg class="ab" style="left:304px;top:137.1px" width="20" height="20" overflow="visible"><use href="#i-other"/></svg>
<svg class="ab" style="left:304px;top:159.6px" width="20" height="20" overflow="visible"><use href="#i-disk"/></svg>
<svg class="ab" style="left:304px;top:182.1px" width="20" height="20" overflow="visible"><use href="#i-chip"/></svg>
<svg class="ab" style="left:304px;top:204.6px" width="20" height="20" overflow="visible"><use href="#i-gpu"/></svg>
<svg class="ab" style="left:328px;top:227.1px" width="20" height="20" overflow="visible"><use href="#i-gpu"/></svg>
<svg class="ab" style="left:304px;top:249.6px" width="20" height="20" overflow="visible"><use href="#i-dvd"/></svg>
<svg class="ab" style="left:304px;top:272.1px" width="20" height="20" overflow="visible"><use href="#i-cam"/></svg>
<svg class="ab" style="left:304px;top:294.6px" width="20" height="20" overflow="visible"><use href="#i-kbd"/></svg>
<svg class="ab" style="left:304px;top:317.1px" width="20" height="20" overflow="visible"><use href="#i-mon"/></svg>
<svg class="ab" style="left:304px;top:339.6px" width="20" height="20" overflow="visible"><use href="#i-mouse"/></svg>
<svg class="ab" style="left:304px;top:362.1px" width="20" height="20" overflow="visible"><use href="#i-pc"/></svg>
<svg class="ab" style="left:304px;top:384.6px" width="20" height="20" overflow="visible"><use href="#i-cpu"/></svg>
<svg class="ab" style="left:304px;top:407.1px" width="20" height="20" overflow="visible"><use href="#i-ide"/></svg>
<svg class="ab" style="left:304px;top:429.6px" width="20" height="20" overflow="visible"><use href="#i-stor"/></svg>
<svg class="ab" style="left:304px;top:452.1px" width="20" height="20" overflow="visible"><use href="#i-usb"/></svg>
<svg class="ab" style="left:304px;top:474.6px" width="20" height="20" overflow="visible"><use href="#i-spk"/></svg>
<svg class="ab" style="left:328px;top:497.1px" width="20" height="20" overflow="visible"><use href="#i-spk"/></svg>
<svg class="ab" style="left:328px;top:519.6px" width="20" height="20" overflow="visible"><use href="#i-spk"/></svg>
<svg class="ab" style="left:328px;top:542.1px" width="20" height="20" overflow="visible"><use href="#i-spk"/></svg>
<svg class="ab" style="left:328px;top:564.6px" width="20" height="20" overflow="visible"><use href="#i-spk"/></svg>
<svg class="ab" style="left:328px;top:587.1px" width="20" height="20" overflow="visible"><use href="#i-spk"/></svg>
<svg class="ab" style="left:304px;top:609.6px" width="20" height="20" overflow="visible"><use href="#i-net"/></svg>
<svg class="ab" style="left:304px;top:632.1px" width="20" height="20" overflow="visible"><use href="#i-swd"/></svg>
<svg class="ab" style="left:304px;top:654.6px" width="20" height="20" overflow="visible"><use href="#i-swc"/></svg>
<svg class="ab" style="left:304px;top:677.1px" width="20" height="20" overflow="visible"><use href="#i-sys"/></svg>
<svg class="ab" style="left:304px;top:699.6px" width="20" height="20" overflow="visible"><use href="#i-prn"/></svg>
<svg class="ab" style="left:304px;top:722.1px" width="20" height="20" overflow="visible"><use href="#i-sec"/></svg>
<svg class="ab" style="left:304px;top:744.6px" width="20" height="20" overflow="visible"><use href="#i-hid"/></svg>
<svg class="ab" style="left:304px;top:767.1px" width="20" height="20" overflow="visible"><use href="#i-spk"/></svg>
<svg class="ab" style="left:328px;top:789.6px" width="20" height="20" overflow="visible"><use href="#i-mic"/></svg>
<svg class="ab" style="left:328px;top:812.1px" width="20" height="20" overflow="visible"><use href="#i-spk"/></svg>
<svg class="ab" style="left:328px;top:834.6px" width="20" height="20" overflow="visible"><use href="#i-snd"/></svg>
<svg class="ab" style="left:15px;top:114.6px" width="20" height="20" overflow="visible"><use href="#i-cm"/></svg>
<svg class="ab" style="left:39px;top:137.1px" width="20" height="20" overflow="visible"><use href="#i-tools"/></svg>
<svg class="ab" style="left:63px;top:159.6px" width="20" height="20" overflow="visible"><use href="#i-clock"/></svg>
<svg class="ab" style="left:63px;top:182.1px" width="20" height="20" overflow="visible"><use href="#i-evt"/></svg>
<svg class="ab" style="left:63px;top:204.6px" width="20" height="20" overflow="visible"><use href="#i-shf"/></svg>
<svg class="ab" style="left:63px;top:227.1px" width="20" height="20" overflow="visible"><use href="#i-perf"/></svg>
<svg class="ab" style="left:63px;top:249.6px" width="20" height="20" overflow="visible"><use href="#i-dm"/></svg>
<svg class="ab" style="left:39px;top:272.1px" width="20" height="20" overflow="visible"><use href="#i-sto"/></svg>
<svg class="ab" style="left:63px;top:294.6px" width="20" height="20" overflow="visible"><use href="#i-dsk"/></svg>
<svg class="ab" style="left:39px;top:317.1px" width="20" height="20" overflow="visible"><use href="#i-svc"/></svg>
<div class="tx" style="left:330.33px;top:113.75px;letter-spacing:0.241px;">Bluetooth</div>
<div class="tx" style="left:330.41px;top:136.25px;letter-spacing:-0.450px;transform:scaleX(0.9107);transform-origin:0 0;">Další</div>
<div class="tx" style="left:364.80px;top:136.25px;letter-spacing:-0.450px;transform:scaleX(0.9783);transform-origin:0 0;">zařízení</div>
<div class="tx" style="left:330.33px;top:158.75px;letter-spacing:-0.450px;transform:scaleX(0.9950);transform-origin:0 0;">Diskové</div>
<div class="tx" style="left:384.87px;top:158.75px;letter-spacing:0.187px;">jednotky</div>
<div class="tx" style="left:330.33px;top:181.25px;letter-spacing:-0.427px;">Firmware</div>
<div class="tx" style="left:330.43px;top:203.75px;letter-spacing:-0.450px;transform:scaleX(0.9917);transform-origin:0 0;">Grafické</div>
<div class="tx" style="left:386.46px;top:203.75px;letter-spacing:-0.138px;">adaptéry</div>
<div class="tx" style="left:354.33px;top:226.25px;letter-spacing:-0.450px;transform:scaleX(0.9925);transform-origin:0 0;">AMD</div>
<div class="tx" style="left:390.54px;top:226.25px;letter-spacing:-0.450px;transform:scaleX(0.9874);transform-origin:0 0;">Radeon(TM)</div>
<div class="tx" style="left:473.42px;top:226.25px;letter-spacing:-0.450px;transform:scaleX(0.9179);transform-origin:0 0;">Vega</div>
<div class="tx" style="left:507.57px;top:226.25px;letter-spacing:0.000px;">8</div>
<div class="tx" style="left:519.35px;top:226.25px;letter-spacing:-0.450px;transform:scaleX(0.9770);transform-origin:0 0;">Graphics</div>
<div class="tx" style="left:330.02px;top:248.75px;letter-spacing:-0.396px;">Jednotky</div>
<div class="tx" style="left:392.43px;top:248.75px;letter-spacing:-0.450px;transform:scaleX(0.9993);transform-origin:0 0;">DVD/CD-ROM</div>
<div class="tx" style="left:330.35px;top:271.25px;letter-spacing:-0.450px;transform:scaleX(0.9694);transform-origin:0 0;">Kamery</div>
<div class="tx" style="left:330.33px;top:293.75px;letter-spacing:-0.450px;transform:scaleX(0.9934);transform-origin:0 0;">Klávesnice</div>
<div class="tx" style="left:330.33px;top:316.25px;letter-spacing:0.522px;">Monitory</div>
<div class="tx" style="left:330.33px;top:338.75px;letter-spacing:0.171px;">Myši</div>
<div class="tx" style="left:365.08px;top:338.75px;letter-spacing:0.000px;">a</div>
<div class="tx" style="left:376.87px;top:338.75px;letter-spacing:-0.225px;">jiná</div>
<div class="tx" style="left:404.37px;top:338.75px;letter-spacing:-0.209px;">polohovací</div>
<div class="tx" style="left:479.80px;top:338.75px;letter-spacing:-0.450px;transform:scaleX(0.9823);transform-origin:0 0;">zařízení</div>
<div class="tx" style="left:330.34px;top:361.25px;letter-spacing:-0.450px;transform:scaleX(0.9843);transform-origin:0 0;">Počítač</div>
<div class="tx" style="left:330.35px;top:383.75px;letter-spacing:-0.450px;transform:scaleX(0.9721);transform-origin:0 0;">Procesory</div>
<div class="tx" style="left:330.40px;top:406.25px;letter-spacing:-0.450px;transform:scaleX(0.9244);transform-origin:0 0;">Řadiče</div>
<div class="tx" style="left:375.81px;top:406.25px;letter-spacing:-0.450px;transform:scaleX(0.8998);transform-origin:0 0;">IDE</div>
<div class="tx" style="left:401.62px;top:406.25px;letter-spacing:-0.450px;transform:scaleX(0.8967);transform-origin:0 0;">ATA/ATAPI</div>
<div class="tx" style="left:330.40px;top:428.75px;letter-spacing:-0.450px;transform:scaleX(0.9244);transform-origin:0 0;">Řadiče</div>
<div class="tx" style="left:375.77px;top:428.75px;letter-spacing:-0.168px;">paměťových</div>
<div class="tx" style="left:460.50px;top:428.75px;letter-spacing:-0.450px;transform:scaleX(0.9823);transform-origin:0 0;">zařízení</div>
<div class="tx" style="left:330.40px;top:451.25px;letter-spacing:-0.450px;transform:scaleX(0.9244);transform-origin:0 0;">Řadiče</div>
<div class="tx" style="left:375.87px;top:451.25px;letter-spacing:-0.450px;transform:scaleX(0.8716);transform-origin:0 0;">USB</div>
<div class="tx" style="left:406.48px;top:451.25px;letter-spacing:-0.450px;transform:scaleX(0.9882);transform-origin:0 0;">(Universal</div>
<div class="tx" style="left:473.59px;top:451.25px;letter-spacing:-0.450px;transform:scaleX(0.9915);transform-origin:0 0;">Serial</div>
<div class="tx" style="left:513.69px;top:451.25px;letter-spacing:-0.450px;transform:scaleX(0.9344);transform-origin:0 0;">Bus)</div>
<div class="tx" style="left:330.40px;top:473.75px;letter-spacing:-0.450px;transform:scaleX(0.9244);transform-origin:0 0;">Řadiče</div>
<div class="tx" style="left:375.89px;top:473.75px;letter-spacing:-0.181px;">zvuku,</div>
<div class="tx" style="left:422.43px;top:473.75px;letter-spacing:-0.450px;transform:scaleX(0.9657);transform-origin:0 0;">videa</div>
<div class="tx" style="left:460.18px;top:473.75px;letter-spacing:0.000px;">a</div>
<div class="tx" style="left:471.65px;top:473.75px;letter-spacing:-0.331px;">her</div>
<div class="tx" style="left:354.33px;top:496.25px;letter-spacing:-0.450px;transform:scaleX(0.9925);transform-origin:0 0;">AMD</div>
<div class="tx" style="left:390.53px;top:496.25px;letter-spacing:0.002px;">High</div>
<div class="tx" style="left:425.43px;top:496.25px;letter-spacing:0.139px;">Definition</div>
<div class="tx" style="left:494.03px;top:496.25px;letter-spacing:-0.266px;">Audio</div>
<div class="tx" style="left:536.43px;top:496.25px;letter-spacing:-0.450px;transform:scaleX(0.9947);transform-origin:0 0;">Device</div>
<div class="tx" style="left:354.33px;top:518.75px;letter-spacing:-0.450px;transform:scaleX(0.9925);transform-origin:0 0;">AMD</div>
<div class="tx" style="left:390.08px;top:518.75px;letter-spacing:-0.226px;">Streaming</div>
<div class="tx" style="left:460.23px;top:518.75px;letter-spacing:-0.266px;">Audio</div>
<div class="tx" style="left:502.53px;top:518.75px;letter-spacing:-0.450px;transform:scaleX(0.9971);transform-origin:0 0;">Device</div>
<div class="tx" style="left:353.33px;top:541.25px;letter-spacing:-0.134px;">Karolina’s</div>
<div class="tx" style="left:420.97px;top:541.25px;letter-spacing:0.000px;">–</div>
<div class="tx" style="left:433.03px;top:541.25px;letter-spacing:-0.450px;transform:scaleX(0.9869);transform-origin:0 0;">AirPody</div>
<div class="tx" style="left:486.74px;top:541.25px;letter-spacing:-0.450px;transform:scaleX(0.9847);transform-origin:0 0;">Hands-Free</div>
<div class="tx" style="left:565.92px;top:541.25px;letter-spacing:-0.450px;transform:scaleX(0.8207);transform-origin:0 0;">AG</div>
<div class="tx" style="left:588.63px;top:541.25px;letter-spacing:-0.191px;">Audio</div>
<div class="tx" style="left:353.33px;top:563.75px;letter-spacing:-0.134px;">Karolina’s</div>
<div class="tx" style="left:420.97px;top:563.75px;letter-spacing:0.000px;">–</div>
<div class="tx" style="left:433.03px;top:563.75px;letter-spacing:-0.450px;transform:scaleX(0.9869);transform-origin:0 0;">AirPody</div>
<div class="tx" style="left:486.30px;top:563.75px;letter-spacing:-0.450px;transform:scaleX(0.9819);transform-origin:0 0;">Stereo</div>
<div class="tx" style="left:353.33px;top:586.25px;letter-spacing:-0.450px;transform:scaleX(0.9979);transform-origin:0 0;">Realtek</div>
<div class="tx" style="left:405.63px;top:586.25px;letter-spacing:-0.031px;">High</div>
<div class="tx" style="left:440.53px;top:586.25px;letter-spacing:0.106px;">Definition</div>
<div class="tx" style="left:509.43px;top:586.25px;letter-spacing:-0.141px;">Audio</div>
<div class="tx" style="left:330.39px;top:608.75px;letter-spacing:-0.450px;transform:scaleX(0.9881);transform-origin:0 0;">Síťové</div>
<div class="tx" style="left:375.36px;top:608.75px;letter-spacing:-0.181px;">adaptéry</div>
<div class="tx" style="left:330.38px;top:631.25px;letter-spacing:-0.450px;transform:scaleX(0.9979);transform-origin:0 0;">Softwarová</div>
<div class="tx" style="left:405.80px;top:631.25px;letter-spacing:-0.450px;transform:scaleX(0.9823);transform-origin:0 0;">zařízení</div>
<div class="tx" style="left:330.38px;top:653.75px;letter-spacing:-0.369px;">Softwarové</div>
<div class="tx" style="left:406.46px;top:653.75px;letter-spacing:0.148px;">komponenty</div>
<div class="tx" style="left:330.41px;top:676.25px;letter-spacing:-0.450px;transform:scaleX(0.9684);transform-origin:0 0;">Systémová</div>
<div class="tx" style="left:403.10px;top:676.25px;letter-spacing:-0.450px;transform:scaleX(0.9844);transform-origin:0 0;">zařízení</div>
<div class="tx" style="left:330.81px;top:698.75px;letter-spacing:-0.375px;">Tiskové</div>
<div class="tx" style="left:383.63px;top:698.75px;letter-spacing:0.310px;">fronty</div>
<div class="tx" style="left:330.81px;top:721.25px;letter-spacing:-0.450px;transform:scaleX(0.9705);transform-origin:0 0;">Zabezpečovací</div>
<div class="tx" style="left:428.20px;top:721.25px;letter-spacing:-0.450px;transform:scaleX(0.9783);transform-origin:0 0;">zařízení</div>
<div class="tx" style="left:330.81px;top:743.75px;letter-spacing:-0.450px;transform:scaleX(0.9522);transform-origin:0 0;">Zařízení</div>
<div class="tx" style="left:384.60px;top:743.75px;letter-spacing:-0.052px;">standardu</div>
<div class="tx" style="left:455.55px;top:743.75px;letter-spacing:-0.450px;transform:scaleX(0.9766);transform-origin:0 0;">HID</div>
<div class="tx" style="left:330.81px;top:766.25px;letter-spacing:-0.362px;">Zvukové</div>
<div class="tx" style="left:389.43px;top:766.25px;letter-spacing:-0.067px;">vstupy</div>
<div class="tx" style="left:436.43px;top:766.25px;letter-spacing:0.000px;">a</div>
<div class="tx" style="left:448.93px;top:766.25px;letter-spacing:-0.024px;">výstupy</div>
<div class="tx" style="left:353.83px;top:788.75px;letter-spacing:0.239px;">Microphone</div>
<div class="tx" style="left:438.82px;top:788.75px;letter-spacing:-0.450px;transform:scaleX(0.8936);transform-origin:0 0;">Array</div>
<div class="tx" style="left:474.57px;top:788.75px;letter-spacing:-0.450px;transform:scaleX(0.9963);transform-origin:0 0;">(Realtek</div>
<div class="tx" style="left:531.33px;top:788.75px;letter-spacing:0.002px;">High</div>
<div class="tx" style="left:566.23px;top:788.75px;letter-spacing:0.139px;">Definition</div>
<div class="tx" style="left:635.33px;top:788.75px;letter-spacing:-0.207px;">Audio)</div>
<div class="tx" style="left:353.83px;top:811.25px;letter-spacing:-0.196px;">Reproduktor/HP</div>
<div class="tx" style="left:462.68px;top:811.25px;letter-spacing:-0.450px;transform:scaleX(0.9904);transform-origin:0 0;">(Realtek</div>
<div class="tx" style="left:519.43px;top:811.25px;letter-spacing:0.002px;">High</div>
<div class="tx" style="left:554.33px;top:811.25px;letter-spacing:0.117px;">Definition</div>
<div class="tx" style="left:623.43px;top:811.25px;letter-spacing:-0.247px;">Audio)</div>
<div class="tx" style="left:353.89px;top:833.75px;letter-spacing:-0.450px;transform:scaleX(0.9889);transform-origin:0 0;">Směšovač</div>
<div class="tx" style="left:422.61px;top:833.75px;letter-spacing:-0.450px;transform:scaleX(0.9886);transform-origin:0 0;">stereo</div>
<div class="tx" style="left:465.28px;top:833.75px;letter-spacing:-0.450px;transform:scaleX(0.9924);transform-origin:0 0;">(Realtek</div>
<div class="tx" style="left:522.03px;top:833.75px;letter-spacing:-0.031px;">High</div>
<div class="tx" style="left:556.93px;top:833.75px;letter-spacing:0.117px;">Definition</div>
<div class="tx" style="left:626.03px;top:833.75px;letter-spacing:-0.347px;">Audio)</div>
<div class="tx" style="left:41.16px;top:113.75px;letter-spacing:-0.450px;transform:scaleX(0.9733);transform-origin:0 0;">Správa</div>
<div class="tx" style="left:89.57px;top:113.75px;letter-spacing:-0.433px;">počítače</div>
<div class="tx" style="left:146.77px;top:113.75px;letter-spacing:-0.373px;">(místní)</div>
<div class="tx" style="left:65.14px;top:136.25px;letter-spacing:-0.450px;transform:scaleX(0.9371);transform-origin:0 0;">Systémové</div>
<div class="tx" style="left:134.75px;top:136.25px;letter-spacing:0.547px;">nástroje</div>
<div class="tx" style="left:88.63px;top:158.75px;letter-spacing:-0.450px;transform:scaleX(0.9950);transform-origin:0 0;">Plánovač</div>
<div class="tx" style="left:150.86px;top:158.75px;letter-spacing:0.432px;">úloh</div>
<div class="tx" style="left:88.63px;top:181.25px;letter-spacing:0.014px;">Prohlížeč</div>
<div class="tx" style="left:154.91px;top:181.25px;letter-spacing:-0.450px;transform:scaleX(0.9615);transform-origin:0 0;">událostí</div>
<div class="tx" style="left:88.68px;top:203.75px;letter-spacing:-0.422px;">Sdílené</div>
<div class="tx" style="left:140.51px;top:203.75px;letter-spacing:-0.450px;transform:scaleX(0.9956);transform-origin:0 0;">složky</div>
<div class="tx" style="left:89.63px;top:226.25px;letter-spacing:-0.212px;">Výkon</div>
<div class="tx" style="left:88.70px;top:248.75px;letter-spacing:-0.450px;transform:scaleX(0.9817);transform-origin:0 0;">Správce</div>
<div class="tx" style="left:143.53px;top:248.75px;letter-spacing:-0.450px;transform:scaleX(0.9478);transform-origin:0 0;">zařízení</div>
<div class="tx" style="left:65.14px;top:271.25px;letter-spacing:-0.209px;">Úložiště</div>
<div class="tx" style="left:88.70px;top:293.75px;letter-spacing:-0.450px;transform:scaleX(0.9766);transform-origin:0 0;">Správa</div>
<div class="tx" style="left:138.48px;top:293.75px;letter-spacing:-0.423px;">disků</div>
<div class="tx" style="left:65.28px;top:316.25px;letter-spacing:-0.450px;transform:scaleX(0.8978);transform-origin:0 0;">Služby</div>
<div class="tx" style="left:107.43px;top:316.25px;letter-spacing:0.000px;">a</div>
<div class="tx" style="left:119.16px;top:316.25px;letter-spacing:0.243px;">aplikace</div>
<div class="tx" style="left:43.61px;top:14.75px;letter-spacing:-0.450px;transform:scaleX(0.9699);transform-origin:0 0;">Správa</div>
<div class="tx" style="left:92.97px;top:14.75px;letter-spacing:0.053px;">počítače</div>
<div class="tx" style="left:21.08px;top:48.75px;letter-spacing:-0.034px;">Soubor</div>
<div class="tx" style="left:89.37px;top:48.75px;letter-spacing:-0.450px;transform:scaleX(0.9323);transform-origin:0 0;">Akce</div>
<div class="tx" style="left:139.61px;top:48.75px;letter-spacing:-0.215px;">Zobrazit</div>
<div class="tx" style="left:212.53px;top:48.75px;letter-spacing:-0.218px;">Nápověda</div>
<div class="tx" style="left:1010.02px;top:115.85px;letter-spacing:-0.450px;transform:scaleX(0.9744);transform-origin:0 0;font-weight:bold;">Akce</div>
<div class="tx" style="left:1012.31px;top:146.05px;letter-spacing:-0.450px;transform:scaleX(0.9699);transform-origin:0 0;">Správce</div>
<div class="tx" style="left:1066.52px;top:146.05px;letter-spacing:-0.450px;transform:scaleX(0.9559);transform-origin:0 0;">zařízení</div>
<div class="tx" style="left:1042.91px;top:176.15px;letter-spacing:-0.450px;transform:scaleX(0.9171);transform-origin:0 0;">Další</div>
<div class="tx" style="left:1077.27px;top:176.15px;letter-spacing:-0.450px;transform:scaleX(0.9836);transform-origin:0 0;">akce</div>
</body></html>
